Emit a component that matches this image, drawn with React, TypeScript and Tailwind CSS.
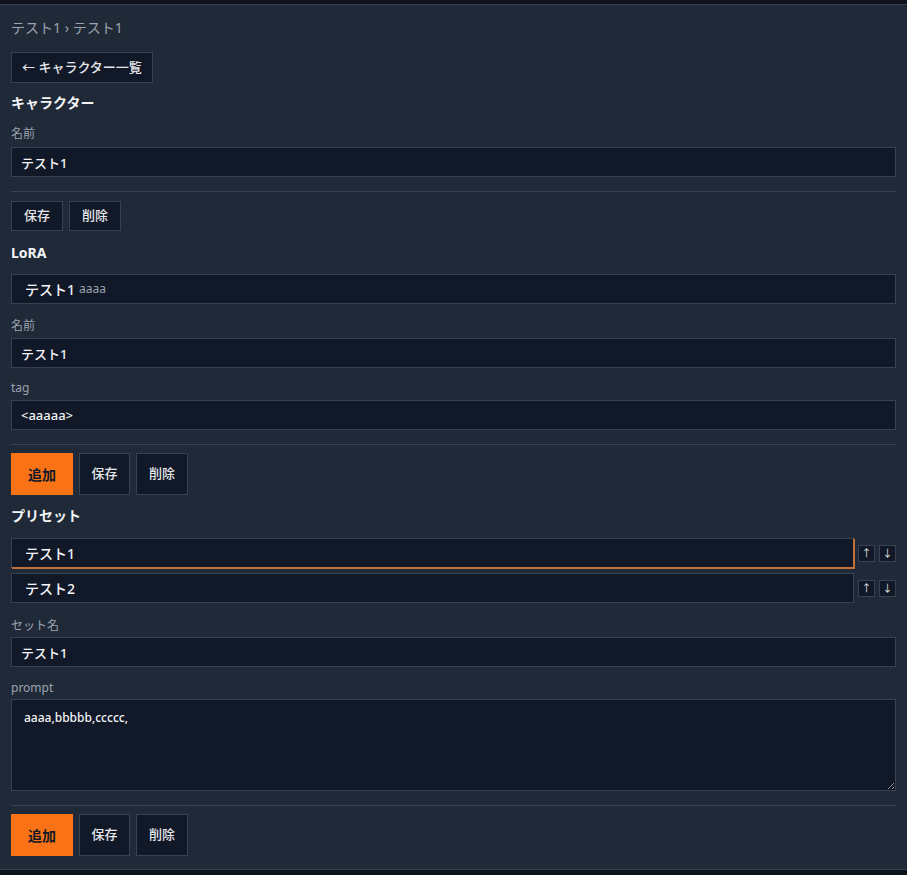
import { ReactNode } from "react";

const font = { fontFamily: '"Noto Sans", "Noto Sans CJK JP", sans-serif' };

function Label({ children, className = "" }: { children: ReactNode; className?: string }) {
  return <div className={`text-[12px] leading-4 text-[#9ca3af] ${className}`}>{children}</div>;
}

function Field({ value, className = "" }: { value: string; className?: string }) {
  return (
    <input
      readOnly
      value={value}
      className={`block w-full h-[30px] px-[9px] text-[13px] font-medium text-[#f3f4f6] bg-[#111827] border border-[#374151] outline-none ${className}`}
      style={font}
    />
  );
}

function SmallButton({ children }: { children: ReactNode }) {
  return (
    <button className="h-[30px] px-3 text-[13px] font-medium text-[#e5e7eb] bg-[#111827] border border-[#374151]">
      {children}
    </button>
  );
}

function ActionRow({ className = "" }: { className?: string }) {
  return (
    <div className={`flex gap-[6px] ${className}`}>
      <button className="h-[42px] w-[62px] text-[14px] font-semibold text-[#111827] bg-[#f97316]">追加</button>
      <button className="h-[42px] w-[51px] text-[13px] font-medium text-[#e5e7eb] bg-[#111827] border border-[#374151]">保存</button>
      <button className="h-[42px] w-[52px] text-[13px] font-medium text-[#e5e7eb] bg-[#111827] border border-[#374151]">削除</button>
    </div>
  );
}

function Heading({ children, className = "" }: { children: ReactNode; className?: string }) {
  return <h2 className={`text-[14px] leading-5 font-bold text-[#f3f4f6] ${className}`}>{children}</h2>;
}

function ArrowButtons() {
  return (
    <div className="flex gap-[4px] ml-[4px]">
      <button className="w-[17px] h-[17px] flex items-center justify-center text-[10px] leading-none text-[#e5e7eb] bg-[#111827] border border-[#374151]">↑</button>
      <button className="w-[17px] h-[17px] flex items-center justify-center text-[10px] leading-none text-[#e5e7eb] bg-[#111827] border border-[#374151]">↓</button>
    </div>
  );
}

export default function App() {
  const presets = [
    { name: "テスト1", selected: true },
    { name: "テスト2", selected: false },
  ];

  return (
    <div className="min-h-screen bg-[#0d111b] pt-1" style={font}>
      <div className="bg-[#1f2937] border-t border-b border-[#374151] px-[11px] pt-[13px] pb-[13px]">
        <div className="text-[14px] leading-5 text-[#9ca3af]">テスト1 › テスト1</div>

        <button className="mt-[14px] h-[31px] px-[10px] text-[13px] font-medium text-[#e5e7eb] bg-[#111827] border border-[#374151]">
          ← キャラクター一覧
        </button>

        <Heading className="mt-[10px]">キャラクター</Heading>
        <Label className="mt-[13px]">名前</Label>
        <Field value="テスト1" className="mt-[5px]" />
        <hr className="mt-[14px] border-[#374151]" />
        <div className="mt-[9px] flex gap-[6px]">
          <SmallButton>保存</SmallButton>
          <SmallButton>削除</SmallButton>
        </div>

        <Heading className="mt-[12px]">LoRA</Heading>
        <div className="mt-[11px] h-[30px] flex items-center gap-1 px-[13px] bg-[#111827] border border-[#374151]">
          <span className="text-[14px] font-medium text-[#f3f4f6]">テスト1</span>
          <span className="text-[12px] text-[#9ca3af]">aaaa</span>
        </div>
        <Label className="mt-[14px]">名前</Label>
        <Field value="テスト1" className="mt-[4px]" />
        <Label className="mt-[12px]">tag</Label>
        <Field value="<aaaaa>" className="mt-[4px] text-[12px]" />
        <hr className="mt-[14px] border-[#374151]" />
        <ActionRow className="mt-[8px]" />

        <Heading className="mt-[11px]">プリセット</Heading>
        <div className="mt-[12px] flex flex-col gap-[5px]">
          {presets.map((p) => (
            <div key={p.name} className="flex items-center">
              <div
                className={`flex-1 h-[30px] flex items-center px-[13px] text-[14px] font-medium text-[#f3f4f6] bg-[#111827] border border-[#374151] ${
                  p.selected ? "border-r-[#c2703a] border-b-[#c2703a] shadow-[1px_1px_0_#c2703a]" : ""
                }`}
              >
                {p.name}
              </div>
              <ArrowButtons />
            </div>
          ))}
        </div>
        <Label className="mt-[15px]">セット名</Label>
        <Field value="テスト1" className="mt-[3px]" />
        <Label className="mt-[13px]">prompt</Label>
        <textarea
          readOnly
          value="aaaa,bbbbb,ccccc,"
          className="mt-[3px] block w-full h-[92px] px-[12px] py-[9px] text-[12px] font-medium text-[#f3f4f6] bg-[#111827] border border-[#374151] outline-none resize-y"
          style={font}
        />
        <hr className="mt-[14px] border-[#374151]" />
        <ActionRow className="mt-[8px]" />
      </div>
    </div>
  );
}
